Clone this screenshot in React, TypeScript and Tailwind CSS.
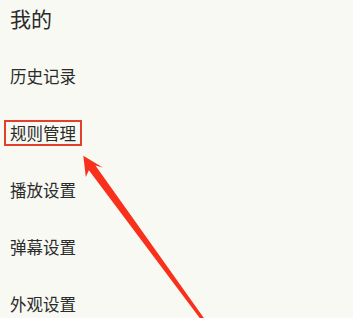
import React from 'react';

const items = ['历史记录', '规则管理', '播放设置', '弹幕设置', '外观设置'];

export default function App() {
  return (
    <div className="relative flex h-[318px] w-[358px] overflow-hidden bg-white font-['Noto_Sans_CJK_SC','Noto_Sans',sans-serif] text-[#2b2b2b]">
      <div className="w-[353px] bg-[#f7f9f2] px-[10px]">
        <h1 className="pt-[4px] text-[21px] font-normal leading-[29px]">我的</h1>
        <ul className="mt-[14px]">
          {items.map((label) => (
            <li key={label} className="flex h-[57px] items-center text-[16.5px] leading-[22px]">
              {label === '规则管理' ? (
                <span className="-ml-[6px] border-2 border-[#e2402c] px-[4px]">{label}</span>
              ) : (
                label
              )}
            </li>
          ))}
        </ul>
      </div>

      {/* annotation arrow */}
      <svg className="pointer-events-none absolute left-0 top-0" width="358" height="318" viewBox="0 0 358 318">
        <polygon
          fill="#f8301c"
          points="83.3,155.8 102.8,167.6 95.4,165.5 211.4,328.6 209.0,330.4 88.9,170.3 85.8,177"
        />
      </svg>
    </div>
  );
}
